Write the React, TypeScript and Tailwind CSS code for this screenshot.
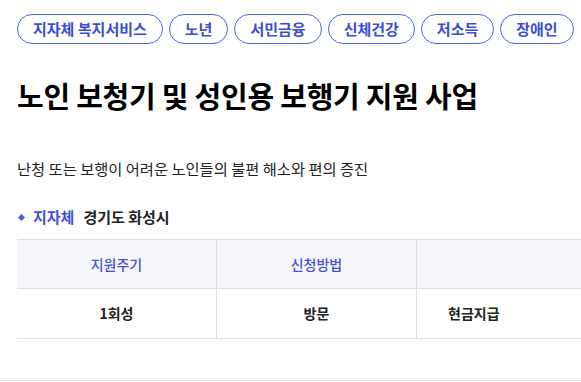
const tags = ["지자체 복지서비스", "노년", "서민금융", "신체건강", "저소득", "장애인"];

export default function App() {
  return (
    <div
      className="w-full h-[382px] overflow-hidden bg-white text-[#111]"
      style={{ fontFamily: '"Noto Sans CJK KR", "Noto Sans", sans-serif' }}
    >
      <div className="border-b border-[#e2e2e2]">
        <div className="pl-[17px] pt-[14px] pb-[41px]">
          <div className="flex gap-[6px] whitespace-nowrap">
            {tags.map((t) => (
              <span
                key={t}
                className="h-[30px] flex items-center px-[15px] rounded-full border border-[#4a66e0] text-[15px] font-bold text-[#3a4dd6] shrink-0"
              >
                {t}
              </span>
            ))}
          </div>

          <h1 className="mt-[33px] text-[29px] leading-[36px] font-bold tracking-[-0.25px] text-black">
            노인 보청기 및 성인용 보행기 지원 사업
          </h1>

          <p className="mt-[44px] text-[15.3px] leading-[22px] text-[#222]">
            난청 또는 보행이 어려운 노인들의 불편 해소와 편의 증진
          </p>

          <div className="mt-[27px] flex items-center text-[15px] leading-[22px] font-bold">
            <span className="w-[5px] h-[5px] bg-[#4a5ae0] rotate-45 ml-[2px] mr-[9px]" />
            <span className="text-[#3f51d6]">지자체</span>
            <span className="ml-[9px] text-[#222]">경기도 화성시</span>
          </div>

          <div className="mt-[11px] w-[700px] border-t border-[#dfdfe3] text-[14px]">
            <div className="grid grid-cols-[200px_200px_300px] h-[49px] bg-[#f5f6fa] border-b border-[#dfdfe3]">
              <div className="flex items-center justify-center font-medium text-[#4352d8] border-r border-[#dfdfe3]">
                지원주기
              </div>
              <div className="flex items-center justify-center font-medium text-[#4352d8] border-r border-[#dfdfe3]">
                신청방법
              </div>
              <div />
            </div>
            <div className="grid grid-cols-[200px_200px_300px] h-[50px] border-b border-[#dfdfe3] font-bold text-[#222]">
              <div className="flex items-center justify-center border-r border-[#dfdfe3]">1회성</div>
              <div className="flex items-center justify-center border-r border-[#dfdfe3]">방문</div>
              <div className="flex items-center pl-[31px]">현금지급</div>
            </div>
          </div>
        </div>
      </div>
    </div>
  );
}
